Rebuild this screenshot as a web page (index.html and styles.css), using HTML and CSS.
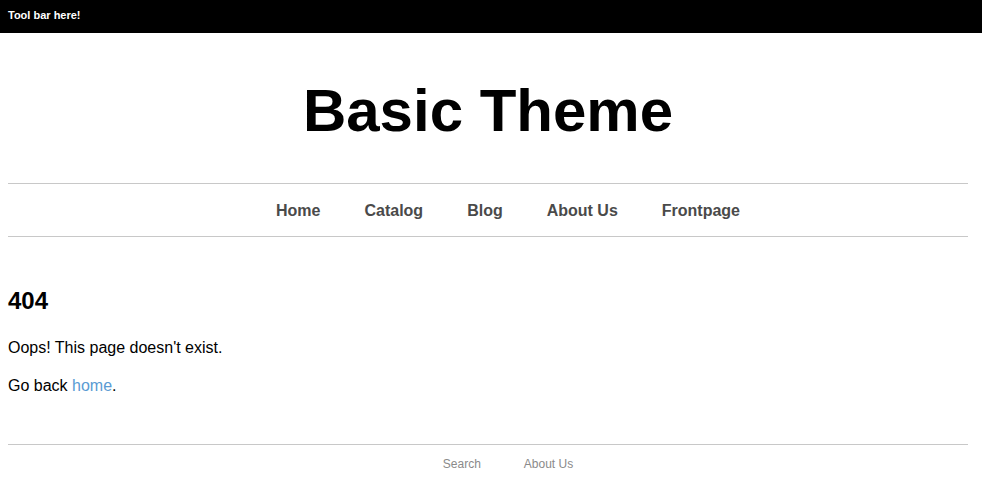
FILE: index.html
```html
<!DOCTYPE html>
<html lang="en">
<head>
<meta charset="utf-8">
<title>Basic Theme</title>
<link rel="stylesheet" href="styles.css">
</head>
<body>
<div class="toolbar">Tool bar here!</div>
<div class="wrapper">
  <header class="site-header">
    <h1 class="site-title">Basic Theme</h1>
  </header>
  <nav class="main-nav">
    <ul class="nav-list">
      <li><a href="#">Home</a></li>
      <li><a href="#">Catalog</a></li>
      <li><a href="#">Blog</a></li>
      <li><a href="#">About Us</a></li>
      <li><a href="#">Frontpage</a></li>
    </ul>
  </nav>
  <main class="content">
    <h2 class="page-title">404</h2>
    <p class="text">Oops! This page doesn't exist.</p>
    <p class="text">Go back <a class="link" href="#">home</a>.</p>
  </main>
  <footer class="site-footer">
    <ul class="footer-list">
      <li><a href="#">Search</a></li>
      <li><a href="#">About Us</a></li>
    </ul>
  </footer>
</div>
</body>
</html>
```
FILE: styles.css
```css
html, body {
  margin: 0;
  padding: 0;
  background: #fff;
  font-family: "Liberation Sans", Arial, Helvetica, sans-serif;
  color: #000;
}

.toolbar {
  background: #000;
  color: #fff;
  height: 33px;
  box-sizing: border-box;
  padding: 9px 8px 0;
  font-size: 11px;
  line-height: 13px;
  font-weight: bold;
}

.wrapper {
  max-width: 960px;
  margin: 0 8px;
}

.site-header {
  padding: 43px 0 37px;
  border-bottom: 1px solid #c8c8c8;
  text-align: center;
}

.site-title {
  margin: 0;
  font-size: 60px;
  line-height: 70px;
  font-weight: bold;
}

.main-nav {
  border-bottom: 1px solid #c8c8c8;
  padding: 17px 0 15px;
}

.nav-list {
  list-style: none;
  margin: 0;
  padding: 0 0 0 40px;
  display: flex;
  justify-content: center;
  gap: 44px;
  font-size: 16px;
  line-height: 20px;
  font-weight: bold;
}

.nav-list a {
  color: #4a4a4a;
  text-decoration: none;
}

.content {
  padding: 50px 0 48px;
}

.page-title {
  margin: 0 0 23px;
  font-size: 24px;
  line-height: 28px;
  font-weight: bold;
}

.text {
  margin: 0 0 18px;
  font-size: 16px;
  line-height: 20px;
}

.text:last-child {
  margin-bottom: 0;
}

.link {
  color: #5a9bd3;
  text-decoration: none;
}

.site-footer {
  border-top: 1px solid #c8c8c8;
  padding-top: 12px;
}

.footer-list {
  list-style: none;
  margin: 0;
  padding: 0 0 0 40px;
  display: flex;
  justify-content: center;
  gap: 43px;
  font-size: 12px;
  line-height: 14px;
}

.footer-list a {
  color: #8a8a8a;
  text-decoration: none;
}
```
